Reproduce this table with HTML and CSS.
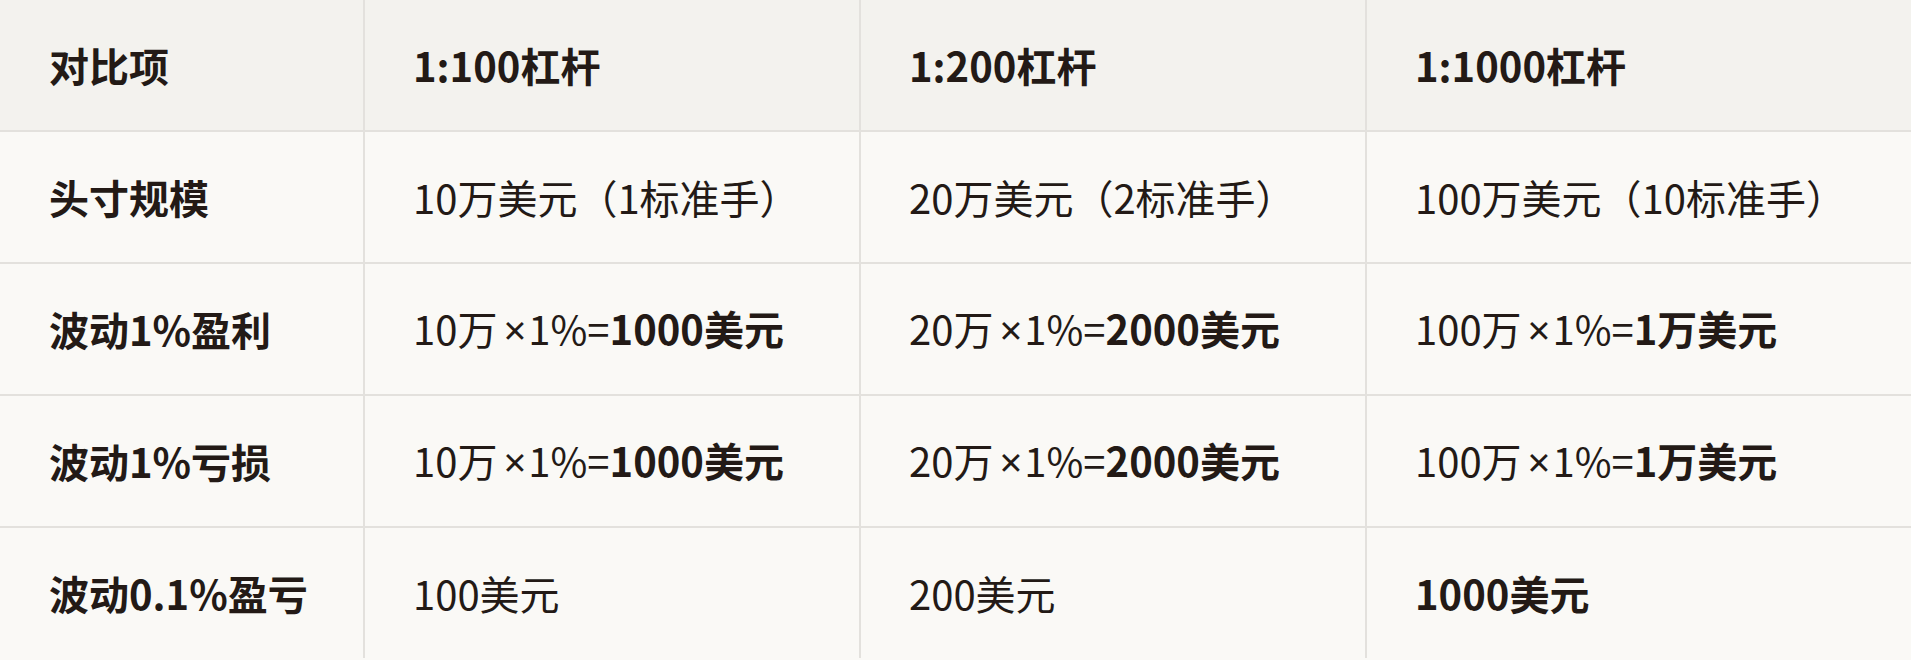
FILE: index.html
```html
<!DOCTYPE html>
<html lang="zh-CN">
<head>
<meta charset="utf-8">
<title>杠杆对比</title>
<link rel="stylesheet" href="styles.css">
</head>
<body>
<table class="cmp">
  <colgroup>
    <col class="c1"><col class="c2"><col class="c3"><col class="c4">
  </colgroup>
  <thead>
    <tr>
      <th>对比项</th>
      <th>1:100杠杆</th>
      <th>1:200杠杆</th>
      <th>1:1000杠杆</th>
    </tr>
  </thead>
  <tbody>
    <tr>
      <td class="label">头寸规模</td>
      <td>10万美元（1标准手）</td>
      <td>20万美元（2标准手）</td>
      <td>100万美元（10标准手）</td>
    </tr>
    <tr>
      <td class="label">波动1%盈利</td>
      <td>10万<span class="x">×</span>1%=<b>1000美元</b></td>
      <td>20万<span class="x">×</span>1%=<b>2000美元</b></td>
      <td>100万<span class="x">×</span>1%=<b>1万美元</b></td>
    </tr>
    <tr>
      <td class="label">波动1%亏损</td>
      <td>10万<span class="x">×</span>1%=<b>1000美元</b></td>
      <td>20万<span class="x">×</span>1%=<b>2000美元</b></td>
      <td>100万<span class="x">×</span>1%=<b>1万美元</b></td>
    </tr>
    <tr>
      <td class="label">波动0.1%盈亏</td>
      <td>100美元</td>
      <td>200美元</td>
      <td><b>1000美元</b></td>
    </tr>
  </tbody>
</table>
</body>
</html>
```
FILE: styles.css
```css
html, body {
  margin: 0;
  padding: 0;
  background: #faf9f6;
}
body {
  font-family: "Noto Sans CJK SC", "Noto Sans", sans-serif;
  color: #231a16;
  overflow: hidden;
}
.cmp {
  width: 1911px;
  border-collapse: collapse;
  table-layout: fixed;
}
.c1 { width: 364px; }
.c2 { width: 496px; }
.c3 { width: 506px; }
.c4 { width: 545px; }
.cmp th, .cmp td {
  height: 130px;
  padding: 0 0 0 48px;
  text-align: left;
  vertical-align: middle;
  font-size: 40px;
  line-height: 1;
  white-space: nowrap;
  border: 2px solid #e3e1dd;
}
.cmp tr > :first-child { border-left: none; padding-left: 49px; }
.cmp tr > :last-child { border-right: none; }
.cmp thead th {
  border-top: none;
  background: #f3f2ee;
  font-weight: 700;
}
.cmp tbody tr:last-child td { border-bottom: none; }
.cmp td { font-weight: 400; }
.cmp td.label, .cmp td b { font-weight: 700; }
.x {
  font-family: "Noto Sans", "DejaVu Sans", sans-serif;
  margin: 0 2px 0 6px;
}
```
